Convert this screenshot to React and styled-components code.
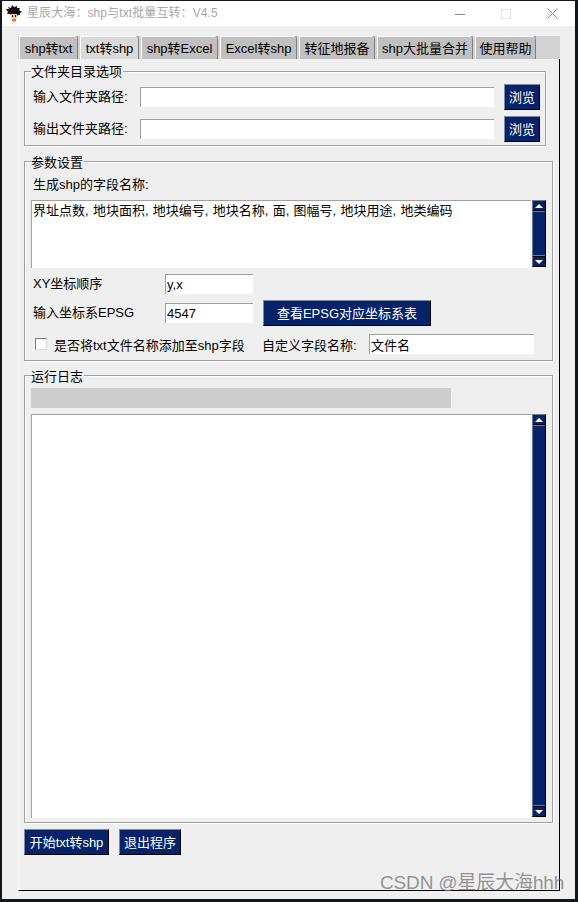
import React from 'react';
import styled, { createGlobalStyle, css } from 'styled-components';

const Global = createGlobalStyle`
  html, body { margin: 0; padding: 0; background: #15161c; }
  * { box-sizing: border-box; }
  body { font-family: "Liberation Sans", "Noto Sans CJK SC", sans-serif; font-size: 13px; color: #000; }
`;

const Win = styled.div`
  position: relative;
  width: 578px; height: 902px;
  padding: 1px 3px 3px 2px;
  background: #15161c;
  display: flex; flex-direction: column;
  overflow: hidden;
`;
const TitleBar = styled.div`
  height: 25px; background: #fff; flex: none;
  display: flex; align-items: center;
  padding-left: 4px;
`;
const TitleText = styled.span`
  margin-left: 5px; color: #a8a8a8; font-size: 12px; letter-spacing: 0.1px; line-height: 25px; white-space: nowrap; flex: 1;
`;
const Ctrl = styled.span`
  width: 46px; height: 25px; display: flex; align-items: center; justify-content: center; flex: none;
`;
const Body = styled.div`
  flex: 1; background: #efefef; padding: 10px 15px 8px 16px; display: flex; flex-direction: column;
`;
const TabStrip = styled.div`
  height: 23px; flex: none; display: flex; gap: 2px; padding-left: 1px; background: #d2d2d2;
  width: 542px;
`;
const Tab = styled.div`
  position: relative;
  width: ${p => p.$w}px; flex: none; height: 23px;
  background: ${p => (p.$active ? '#d9d9d9' : '#c0c0c0')};
  border-top: 1px solid #fff; border-left: 1px solid #fff; border-right: 1px solid #808080;
  text-align: center; line-height: 23px; font-size: 13px; white-space: nowrap;
  &::after {
    content: ""; position: absolute; top: -1px; right: -1px;
    border-top: 3px solid #a8a8a8; border-left: 3px solid transparent;
  }
`;
const Panel = styled.div`
  flex: 1; background: #efefef;
  border-left: 1px solid #fff; border-right: 1px solid #000; border-bottom: 1px solid #000;
  width: 542px; padding: 12px 6px 0 5px;
  display: flex; flex-direction: column;
`;
const Group = styled.div`
  position: relative; flex: none;
  width: ${p => p.$w}px; height: ${p => p.$h}px;
  margin-bottom: ${p => p.$mb}px;
  border: 1px solid #a0a0a0;
  box-shadow: 1px 1px 0 #fff, inset 1px 1px 0 #fff;
  padding: ${p => p.$pt}px 0 0 6px;
  display: flex; flex-direction: column;
`;
const Legend = styled.span`
  position: absolute; top: ${p => p.$top || -7}px; left: 6px; background: #efefef; padding: 0 1px 0 0;
  font-size: 13px; line-height: 15px; white-space: nowrap;
`;
const Row = styled.div`
  display: flex; align-items: center; flex: none;
  height: ${p => p.$h || 20}px; margin-top: ${p => p.$mt || 0}px;
`;
const Label = styled.span`
  margin-left: 2px; width: ${p => p.$w}px; flex: none; font-size: 13px; line-height: 18px; white-space: nowrap;
`;
const Field = styled.input`
  width: ${p => p.$w}px; height: 20px; flex: none; background: #fff; outline: 0;
  border: 0; border-top: 1px solid #a0a0a0; border-left: 1px solid #a0a0a0;
  padding: 0 0 0 1px; margin: 0;
  font: 13px "Liberation Sans", "Noto Sans CJK SC", sans-serif; color: #000;
`;
const NavyButton = styled.button`
  width: ${p => p.$w}px; height: 26px; flex: none; margin: 0 0 0 ${p => p.$ml || 0}px; padding: 0 0 2px;
  background: #06236a; color: #fff;
  border: 1px solid #000; border-top-color: #7c8aa6; border-left-color: #7c8aa6;
  font: 13px "Liberation Sans", "Noto Sans CJK SC", sans-serif;
  white-space: nowrap;
`;
const TextRow = styled.div`
  display: flex; flex: none; height: ${p => p.$h}px; gap: 1px; margin-top: ${p => p.$mt || 0}px;
`;
const TextBox = styled.div`
  width: 500px; height: 100%; background: #fff;
  border-top: 1px solid #a0a0a0; border-left: 1px solid #a0a0a0;
  padding: 1px 0 0 1px; font-size: 13px; line-height: 17px; white-space: nowrap; word-spacing: 0.7px;
`;
const ScrollBar = styled.div`
  width: 14px; height: calc(100% - 1px); display: flex; flex-direction: column;
  background: #06236a;
  border: 1px solid #6f7a90; border-right-color: #000; border-bottom-color: #000;
`;
const Arrow = styled.div`
  height: 10px; flex: none; background: #06236a; display: flex; align-items: center; justify-content: center;
  ${p => (p.$down
    ? css`border-top: 1px solid #000; box-shadow: 0 -1px 0 #6f7a90; margin-top: auto;`
    : css`border-bottom: 1px solid #000; box-shadow: 0 1px 0 #6f7a90;`)}
  &::before {
    content: ""; width: 0; height: 0;
    border-left: 4px solid transparent; border-right: 4px solid transparent;
    ${p => (p.$down ? css`border-top: 4px solid #fff;` : css`border-bottom: 4px solid #fff;`)}
  }
`;
const Check = styled.span`
  width: 12px; height: 12px; margin-left: 4px; flex: none; background: #fff;
  border: 1px solid #7a7a7a; border-right-color: #dcdcdc; border-bottom-color: #dcdcdc;
`;
const CheckLabel = styled.span`
  margin-left: 7px; width: 208px; flex: none; font-size: 13px; white-space: nowrap;
`;
const InlineLabel = styled.span`
  width: 107px; flex: none; font-size: 13px; white-space: nowrap;
`;
const Progress = styled.div`
  width: 420px; height: 20px; flex: none; background: #cdcdcd; margin-bottom: 6px;
`;
const Footer = styled.div`
  display: flex; gap: 10px; margin-top: -1px;
`;
const Watermark = styled.span`
  position: absolute; left: 380px; top: 872px;
  font-size: 19px; line-height: 22px; letter-spacing: -0.15px; color: rgba(110, 110, 110, 0.72); white-space: nowrap;
`;

const Logo = () => (
  <svg width="16" height="17" viewBox="0 0 16 17" style={{ flex: 'none' }}>
    <path d="M0 4l3 0-1-2 3 1 1-3 2 2 3-1 0 2 3 0-1 2 3 2-2 1 0 2-2 0-1 1H6L4 9 1 9l1-2z" fill="#111" />
    <path d="M5 9h6v4l-2 1H7l-2-1z" fill="#f2c09a" />
    <path d="M6 10h1v2H6zm3 0h1v2H9z" fill="#222" />
    <path d="M6 14h4v2.500H6z" fill="#e8793a" />
  </svg>
);
const Min = () => <svg width="10" height="10" viewBox="0 0 10 10"><path d="M0 5.500h10" stroke="#8a8a8a" /></svg>;
const Max = () => <svg width="10" height="10" viewBox="0 0 10 10"><rect x=".5" y=".5" width="9" height="9" fill="none" stroke="#e2e2e2" /></svg>;
const Close = () => <svg width="11" height="11" viewBox="0 0 11 11"><path d="M.5.5l10 10M10.500.5l-10 10" stroke="#8a8a8a" /></svg>;

const tabs = [
  ['shp转txt', 59], ['txt转shp', 59, true], ['shp转Excel', 77], ['Excel转shp', 77],
  ['转征地报备', 76], ['shp大批量合并', 96], ['使用帮助', 61],
];

export default function App() {
  return (
    <>
      <Global />
      <Win>
        <TitleBar>
          <Logo />
          <TitleText>星辰大海：shp与txt批量互转：V4.5</TitleText>
          <Ctrl><Min /></Ctrl>
          <Ctrl><Max /></Ctrl>
          <Ctrl><Close /></Ctrl>
        </TitleBar>
        <Body>
          <TabStrip>
            {tabs.map(([t, w, a]) => <Tab key={t} $w={w} $active={a}>{t}</Tab>)}
          </TabStrip>
          <Panel>
            <Group $w={522} $h={75} $mb={15} $pt={12}>
              <Legend $top={-8}>文件夹目录选项</Legend>
              <Row $h={26}>
                <Label $w={107}>输入文件夹路径:</Label>
                <Field $w={354} readOnly value="" />
                <NavyButton $w={36} $ml={10}>浏览</NavyButton>
              </Row>
              <Row $h={26} $mt={6}>
                <Label $w={107}>输出文件夹路径:</Label>
                <Field $w={354} readOnly value="" />
                <NavyButton $w={36} $ml={10}>浏览</NavyButton>
              </Row>
            </Group>
            <Group $w={529} $h={200} $mb={14} $pt={14}>
              <Legend>参数设置</Legend>
              <Row $h={18}><Label $w={200}>生成shp的字段名称:</Label></Row>
              <TextRow $h={68} $mt={6}>
                <TextBox>界址点数, 地块面积, 地块编号, 地块名称, 面, 图幅号, 地块用途, 地类编码</TextBox>
                <ScrollBar><Arrow /><Arrow $down /></ScrollBar>
              </TextRow>
              <Row $mt={6}>
                <Label $w={132}>XY坐标顺序</Label>
                <Field $w={88} readOnly value="y,x" />
              </Row>
              <Row $h={26} $mt={6}>
                <Label $w={132}>输入坐标系EPSG</Label>
                <Field $w={88} readOnly value="4547" />
                <NavyButton $w={168} $ml={10}>查看EPSG对应坐标系表</NavyButton>
              </Row>
              <Row $mt={8}>
                <Check />
                <CheckLabel>是否将txt文件名称添加至shp字段</CheckLabel>
                <InlineLabel>自定义字段名称:</InlineLabel>
                <Field $w={165} readOnly value="文件名" />
              </Row>
            </Group>
            <Group $w={529} $h={448} $mb={7} $pt={12}>
              <Legend>运行日志</Legend>
              <Progress />
              <TextRow $h={404}>
                <TextBox />
                <ScrollBar><Arrow /><Arrow $down /></ScrollBar>
              </TextRow>
            </Group>
            <Footer>
              <NavyButton $w={85}>开始txt转shp</NavyButton>
              <NavyButton $w={62}>退出程序</NavyButton>
            </Footer>
          </Panel>
        </Body>
        <Watermark>CSDN @星辰大海hhh</Watermark>
      </Win>
    </>
  );
}
